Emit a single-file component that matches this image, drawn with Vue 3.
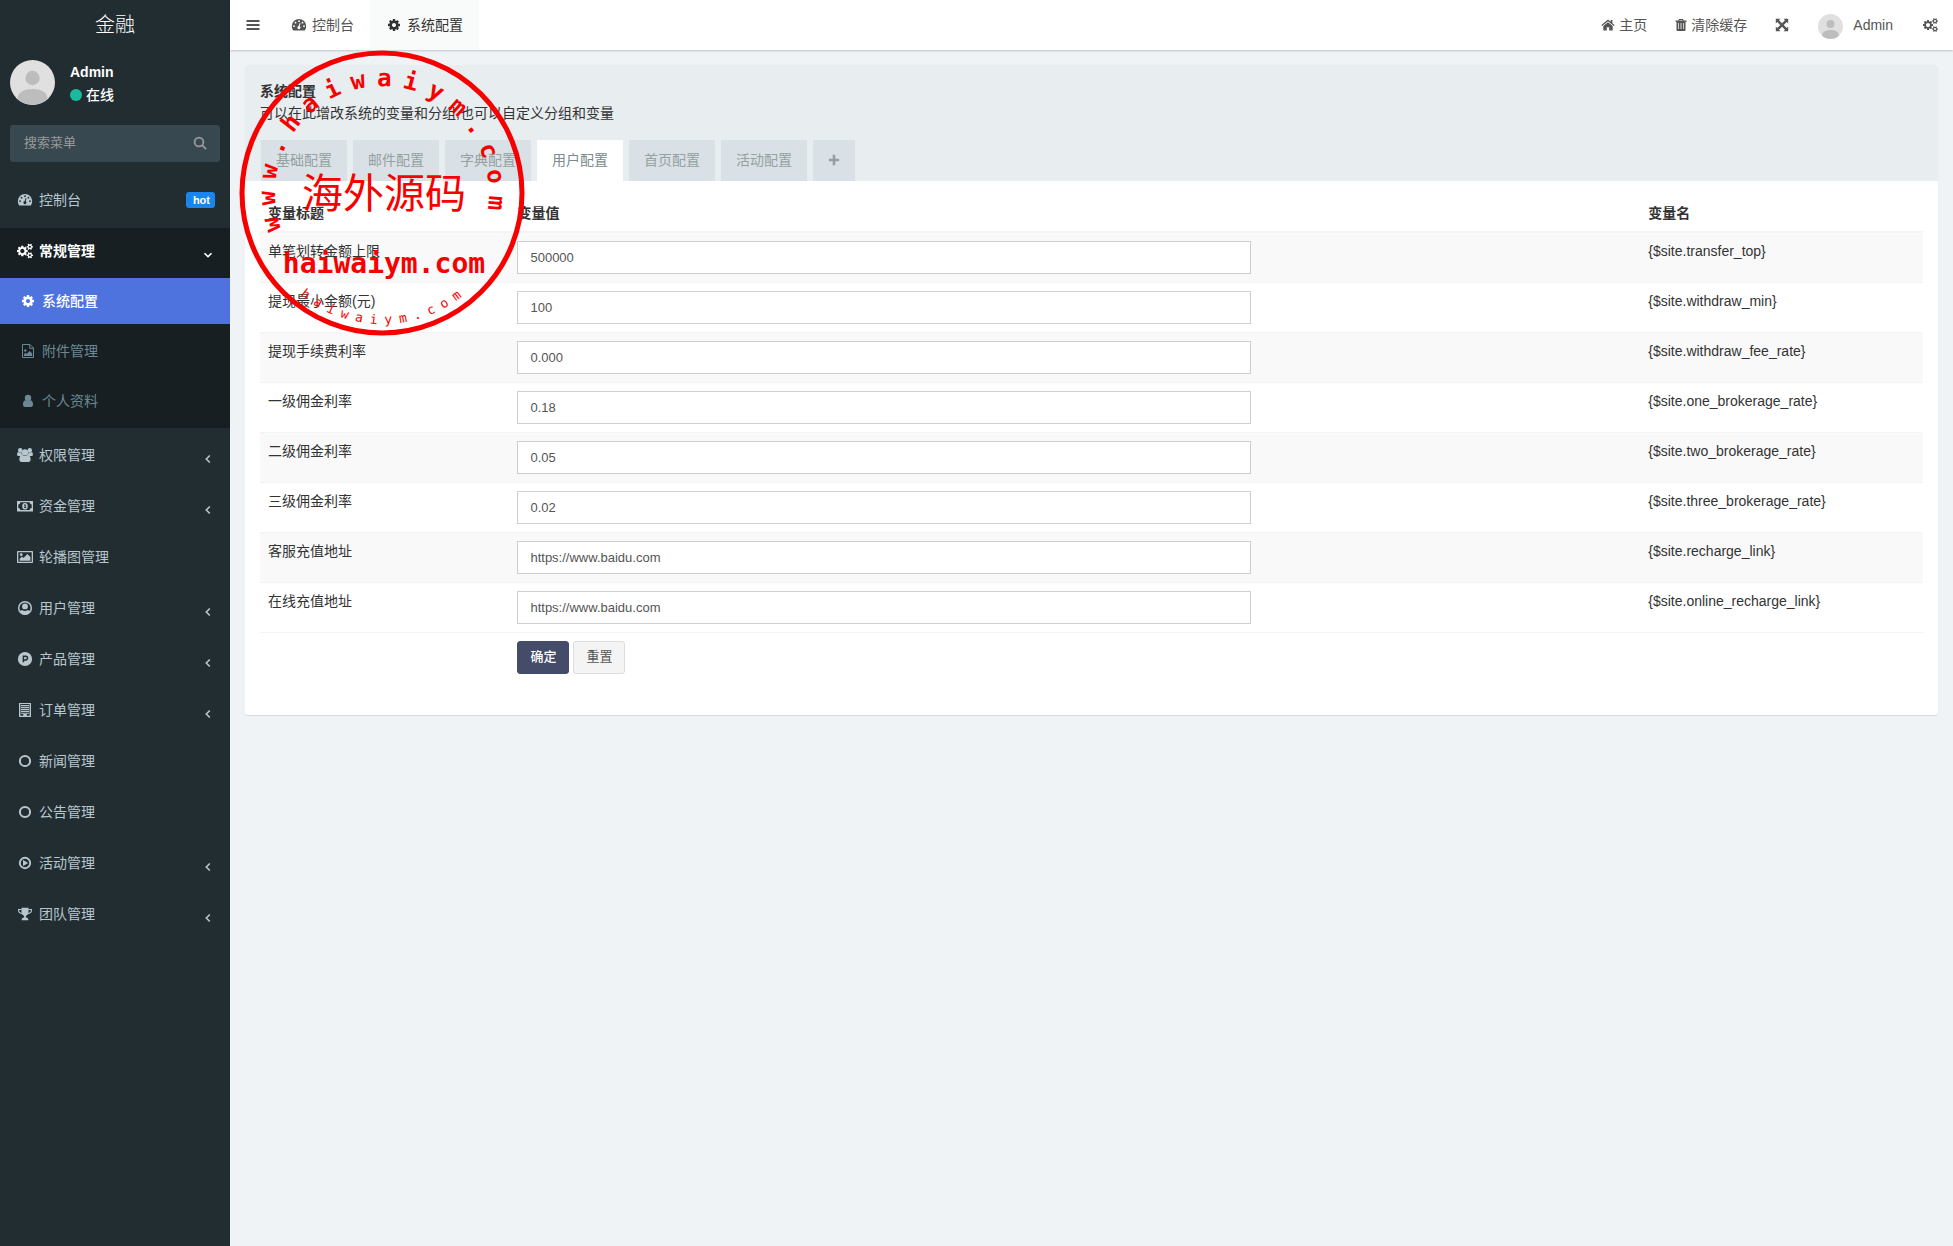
<template>
  <div class="layout">
    <!-- Icon sprite -->
    <svg class="sprite" aria-hidden="true">
      <symbol id="i-cog" viewBox="-128 -128 2048 2048"><path d="M1152 896q0-106-75-181t-181-75-181 75-75 181 75 181 181 75 181-75 75-181zm512-109v222q0 12-8 23t-20 13l-185 28q-19 54-39 91 35 50 107 138 10 12 10 25t-9 23q-27 37-99 108t-94 71q-12 0-26-9l-138-108q-44 23-91 38-16 136-29 186-7 28-36 28h-222q-14 0-24.500-8.500t-11.500-21.500l-28-184q-49-16-90-37l-141 107q-10 9-25 9-14 0-25-11-126-114-165-168-7-10-7-23 0-12 8-23 15-21 51-66.500t54-70.500q-27-50-41-99l-183-27q-13-2-21-12.500t-8-23.500v-222q0-12 8-23t19-13l186-28q14-46 39-92-40-57-107-138-10-12-10-24 0-10 9-23 26-36 98.500-107.500t94.500-71.500q13 0 26 10l138 107q44-23 91-38 16-136 29-186 7-28 36-28h222q14 0 24.500 8.500t11.500 21.500l28 184q49 16 90 37l142-107q9-9 24-9 13 0 25 10 129 119 165 170 7 8 7 22 0 12-8 23-15 21-51 66.500t-54 70.500q26 50 41 98l183 28q13 2 21 12.500t8 23.500z" /></symbol>
      <symbol id="i-cogs" viewBox="0 0 1920 1792"><path d="M896 896q0-106-75-181t-181-75-181 75-75 181 75 181 181 75 181-75 75-181zm768 512q0-52-38-90t-90-38-90 38-38 90q0 53 37.500 90.500t90.500 37.500 90.500-37.500 37.500-90.500zm0-1024q0-52-38-90t-90-38-90 38-38 90q0 53 37.500 90.500t90.500 37.500 90.500-37.500 37.500-90.500zm-384 421v185q0 10-7 19.500t-16 10.500l-155 24q-11 35-32 76 34 48 90 115 7 11 7 20 0 12-7 19-23 30-82.500 89.500t-78.500 59.500q-11 0-21-7l-115-90q-37 19-77 31-11 108-23 155-7 24-30 24h-186q-11 0-20-7.500t-10-17.500l-23-153q-34-10-75-31l-118 89q-7 7-20 7-11 0-21-8-144-133-144-160 0-9 7-19 10-14 41-53t47-61q-23-44-35-82l-152-24q-10-1-17-9.500t-7-19.500v-185q0-10 7-19.500t16-10.500l155-24q11-35 32-76-34-48-90-115-7-11-7-20 0-12 7-20 22-30 82-89t79-59q11 0 21 7l115 90q34-18 77-32 11-108 23-154 7-24 30-24h186q11 0 20 7.500t10 17.500l23 153q34 10 75 31l118-89q8-7 20-7 11 0 21 8 144 133 144 160 0 8-7 19-12 16-42 54t-45 60q23 48 34 82l152 23q10 2 17 10.500t7 19.500zm640 533v140q0 16-149 31-12 27-30 52 51 113 51 138 0 4-4 7-122 71-124 71-8 0-46-47t-52-68q-20 2-30 2t-30-2q-14 21-52 68t-46 47q-2 0-124-71-4-3-4-7 0-25 51-138-18-25-30-52-149-15-149-31v-140q0-16 149-31 13-29 30-52-51-113-51-138 0-4 4-7 4-2 35-20t59-34 30-16q8 0 46 46.500t52 67.500q20-2 30-2t30 2q51-71 92-112l6-2q4 0 124 70 4 3 4 7 0 25-51 138 17 23 30 52 149 15 149 31zm0-1024v140q0 16-149 31-12 27-30 52 51 113 51 138 0 4-4 7-122 71-124 71-8 0-46-47t-52-68q-20 2-30 2t-30-2q-14 21-52 68t-46 47q-2 0-124-71-4-3-4-7 0-25 51-138-18-25-30-52-149-15-149-31v-140q0-16 149-31 13-29 30-52-51-113-51-138 0-4 4-7 4-2 35-20t59-34 30-16q8 0 46 46.500t52 67.500q20-2 30-2t30 2q51-71 92-112l6-2q4 0 124 70 4 3 4 7 0 25-51 138 17 23 30 52 149 15 149 31z" /></symbol>
      <symbol id="i-dashboard" viewBox="0 0 16 16"><path fill-rule="evenodd" d="M8 2a7.200 7.200 0 0 0-7.200 7.200c0 1.500.4 2.800 1.200 4 .1.200.3.300.5.300h11c.2 0 .4-.1.500-.3.800-1.200 1.200-2.500 1.200-4A7.200 7.200 0 0 0 8 2zM3 8.300a.9.9 0 1 1 0 1.800.9.9 0 0 1 0-1.800zM4.500 4.800a.9.9 0 1 1 0 1.800.9.9 0 0 1 0-1.800zM8 3.300a.9.9 0 1 1 0 1.800.9.9 0 0 1 0-1.800zM11.500 4.800a.9.9 0 1 1 0 1.800.9.9 0 0 1 0-1.800zM13 8.300a.9.9 0 1 1 0 1.800.9.9 0 0 1 0-1.800zM8.600 6l.9.2-.8 3.100a1.500 1.500 0 1 1-1-.2z" /></symbol>
      <symbol id="i-bars" viewBox="0 0 14 14"><path d="M.5 2h13v2H.5zM.5 6h13v2H.5zM.5 10h13v2H.5z" /></symbol>
      <symbol id="i-search" viewBox="0 0 14 14"><g fill="none" stroke="currentColor" stroke-width="1.800"><circle cx="6" cy="6" r="4.400" /><path d="M9.300 9.300l3.300 3.300" stroke-linecap="round" /></g></symbol>
      <symbol id="i-left" viewBox="0 0 14 14"><path d="M8.800 3.500L5.300 7l3.500 3.500" fill="none" stroke="currentColor" stroke-width="1.600" /></symbol>
      <symbol id="i-down" viewBox="0 0 14 14"><path d="M3.500 5.200L7 8.700l3.500-3.500" fill="none" stroke="currentColor" stroke-width="1.600" /></symbol>
      <symbol id="i-file" viewBox="0 0 16 16"><path d="M2.500 1.500h7.500l3.500 3.500v9.500h-11zM9.700 1.500v3.800h3.800" fill="none" stroke="currentColor" /><circle cx="5.300" cy="7.500" r="1.200" /><path d="M4 13v-1.800l1.500-1.400 1.200 1.200 3-3 2.500 2.500V13z" /></symbol>
      <symbol id="i-user" viewBox="0 0 16 16"><circle cx="8" cy="5" r="3.200" /><path d="M5.300 7.300C3.600 7.500 3 9.500 3 11.800c0 1.300.8 2.200 2 2.200h6c1.200 0 2-.9 2-2.200 0-2.300-.6-4.300-2.300-4.500-1.500 1.400-3.900 1.400-5.400 0z" /></symbol>
      <symbol id="i-users" viewBox="0 0 16 16"><circle cx="3.200" cy="3.200" r="2.200" /><circle cx="12.800" cy="3.200" r="2.200" /><circle cx="8" cy="5.400" r="3.200" /><path d="M5.400 8C2.900 8 2.400 10.600 2.400 12.800c0 1.300.9 2.200 2.100 2.200h7c1.200 0 2.100-.9 2.100-2.200 0-2.200-.5-4.800-3-4.800-1.600 1.400-3.600 1.400-5.200 0zM1.400 4.900C.3 5 .1 6.300.1 7.700c0 .9.600 1.400 1.400 1.400h1.800c.5-.7 1.200-1.200 2-1.300-.7-.8-1-1.700-.9-2.700-1 .6-2.100.5-3-.2zM14.600 4.900c1.100.1 1.300 1.400 1.300 2.800 0 .9-.6 1.400-1.400 1.400h-1.800c-.5-.7-1.200-1.200-2-1.300.7-.8 1-1.700.9-2.700 1 .6 2.100.5 3-.2z" /></symbol>
      <symbol id="i-money" viewBox="0 0 16 16"><path fill-rule="evenodd" d="M0 3h16v10.400H0zM3.400 4.300c0 1.200-.9 2.100-2.100 2.100V10c1.200 0 2.100.9 2.100 2.100h9.200c0-1.200.9-2.100 2.100-2.100V6.400c-1.200 0-2.100-.9-2.100-2.100z" /><path fill-rule="evenodd" d="M8 4.900a2.800 3.300 0 1 1 0 6.600 2.800 3.300 0 0 1 0-6.600zM7 6.600v.8h.6v1.800H7v.8h2.200v-.8h-.5V6.400h-.8z" /></symbol>
      <symbol id="i-image" viewBox="0 0 16 16"><path fill-rule="evenodd" d="M.8 2h14.400c.5 0 .8.300.8.800v10.400c0 .5-.3.800-.8.800H.8c-.5 0-.8-.3-.8-.8V2.800C0 2.300.3 2 .8 2zm.5 1.200v9.600h13.400V3.200z" /><circle cx="4.200" cy="5.700" r="1.400" /><path d="M2.600 11.800V9.900l2.300-2.300 1.500 1.500 4-4 3 3v3.700z" /></symbol>
      <symbol id="i-usercircle" viewBox="0 0 16 16"><circle cx="8" cy="8" r="6.300" fill="none" stroke="currentColor" stroke-width="1.500" /><circle cx="8" cy="6.400" r="2.900" /><path d="M2.800 11.600c.8-.6 1.500-1.300 2.200-1.500 1.900 1.300 4.100 1.300 6 0 .7.200 1.400.9 2.200 1.500C12 13.700 10.200 15 8 15s-4-1.300-5.200-3.400z" /></symbol>
      <symbol id="i-product" viewBox="0 0 16 16"><circle cx="8" cy="8" r="7.100" /><path d="M6.400 11.300V5.300h2.300a1.800 1.800 0 0 1 0 3.600H6.400" fill="none" stroke="#222d32" stroke-width="1.500" /></symbol>
      <symbol id="i-building" viewBox="0 0 16 16"><path fill-rule="evenodd" d="M2 1h12v14H2zM3.400 2v11.800h2.800V12h3.600v1.800h2.800V2z" /><path d="M4 3h8v1.200H4zM4 5h8v1.200H4zM4 7h8v1.200H4zM4 9h8v1.200H4zM4 11h8v.8H4z" /></symbol>
      <symbol id="i-circle" viewBox="0 0 16 16"><circle cx="8" cy="8" r="5.100" fill="none" stroke="currentColor" stroke-width="2" /></symbol>
      <symbol id="i-play" viewBox="0 0 16 16"><circle cx="8" cy="8" r="5.200" fill="none" stroke="currentColor" stroke-width="1.900" /><path d="M6 4.900L11.200 8 6 11.100z" /></symbol>
      <symbol id="i-trophy" viewBox="0 0 16 16"><path d="M4.500 1.800h7V6c0 2-1.200 3.400-2.600 3.900v1.600c1.600.1 2.400.7 2.400 2v.7H4.700v-.7c0-1.300.8-1.900 2.400-2V9.900C5.700 9.400 4.500 8 4.500 6z" /><path d="M4.500 3.500H1.600v1c0 1.600 1.600 3 4 3.200M11.500 3.500h2.900v1c0 1.600-1.600 3-4 3.200" fill="none" stroke="currentColor" stroke-width="1.100" /></symbol>
      <symbol id="i-home" viewBox="0 0 14 14"><path d="M7 4.200l4.700 3.900v3.800c0 .4-.2.600-.6.600H8.200V9.200H5.800v3.300H2.900c-.4 0-.6-.2-.6-.6V8.100z" /><path d="M7 1.600l2.700 2.200V2h1.700v3.200l2.200 1.900-.7.900L7 3.200 1.100 8l-.7-.9z" /></symbol>
      <symbol id="i-trash" viewBox="1 0 12 14"><path fill-rule="evenodd" d="M5 1h4l.7 1.500h2.800v1.200h-1v8c0 .9-.5 1.300-1.200 1.300H3.700c-.7 0-1.200-.4-1.200-1.300v-8h-1V2.500h2.800zm.5.900l-.3.600h3.600l-.3-.6zM4.300 5v6h.7V5zM6.600 5v6h.8V5zM9 5v6h.7V5z" /></symbol>
      <symbol id="i-expand" viewBox="0 0 14 14"><path d="M.8.800h4.700L4 2.300l3 3 3-3L8.500.8h4.700v4.700L11.700 4l-3 3 3 3 1.500-1.500v4.700H8.500l1.500-1.500-3-3-3 3 1.500 1.500H.8V8.500L2.300 10l3-3-3-3L.8 5.500z" /></symbol>
      <symbol id="i-plus" viewBox="0 0 14 14"><path d="M5.500 1h3v4.500H13v3H8.500V13h-3V8.500H1v-3h4.500z" /></symbol>
      <symbol id="i-avatar" viewBox="0 0 45 45"><circle cx="22.500" cy="22.500" r="22.500" fill="#e0e0e0" /><circle cx="22.500" cy="18" r="7.200" fill="#bdbdbd" /><path d="M7.500 39c0-7 7-10 15-10s15 3 15 10a22.500 22.500 0 0 1-30 0z" fill="#bdbdbd" /></symbol>
    </svg>

    <aside class="sidebar">
      <a href="#" class="logo">金融</a>

      <div class="user-panel">
        <svg class="avatar"><use href="#i-avatar" /></svg>
        <div class="info">
          <strong>Admin</strong>
          <span class="status"><i class="dot"></i>在线</span>
        </div>
      </div>

      <form class="search" @submit.prevent>
        <input type="text" placeholder="搜索菜单" aria-label="搜索菜单" />
        <button type="submit" aria-label="搜索"><svg><use href="#i-search" /></svg></button>
      </form>

      <ul class="menu">
        <li v-for="m in menus" :key="m.name" :class="{ active: m.children }">
          <a href="#">
            <svg class="icon"><use :href="'#i-' + m.icon" /></svg>
            <span>{{ m.name }}</span>
            <span v-if="m.badge" class="badge">{{ m.badge }}</span>
            <svg v-if="m.arrow" class="arrow"><use :href="'#i-' + m.arrow" /></svg>
          </a>
          <ul v-if="m.children" class="submenu">
            <li v-for="c in m.children" :key="c.name">
              <a href="#" :class="{ current: c.current }">
                <svg class="icon"><use :href="'#i-' + c.icon" /></svg>
                <span>{{ c.name }}</span>
              </a>
            </li>
          </ul>
        </li>
      </ul>
    </aside>

    <div class="main">
      <header class="navbar">
        <button class="toggle" aria-label="菜单"><svg><use href="#i-bars" /></svg></button>
        <a href="#" class="nav-tab"><svg class="icon"><use href="#i-dashboard" /></svg>控制台</a>
        <a href="#" class="nav-tab on"><svg class="icon"><use href="#i-cog" /></svg>系统配置</a>
        <nav class="tools">
          <a href="#"><svg><use href="#i-home" /></svg>主页</a>
          <a href="#"><svg class="narrow"><use href="#i-trash" /></svg>清除缓存</a>
          <a href="#" aria-label="全屏"><svg><use href="#i-expand" /></svg></a>
          <a href="#" class="account"><svg><use href="#i-avatar" /></svg>Admin</a>
          <a href="#" class="settings" aria-label="设置"><svg><use href="#i-cogs" /></svg></a>
        </nav>
      </header>

      <section class="content">
        <div class="panel">
          <div class="panel-heading">
            <h1>系统配置</h1>
            <p>可以在此增改系统的变量和分组,也可以自定义分组和变量</p>
            <div class="tabs">
              <button
                v-for="t in tabs"
                :key="t"
                type="button"
                :class="{ on: t === currentTab }"
                @click="currentTab = t"
              >
                {{ t }}
              </button>
              <button type="button" aria-label="添加"><svg><use href="#i-plus" /></svg></button>
            </div>
          </div>

          <form class="panel-body" @submit.prevent>
            <table>
              <thead>
                <tr>
                  <th class="col-title">变量标题</th>
                  <th class="col-value">变量值</th>
                  <th>变量名</th>
                </tr>
              </thead>
              <tbody>
                <tr v-for="row in rows" :key="row.key">
                  <td><label :for="row.key">{{ row.title }}</label></td>
                  <td><input :id="row.key" v-model="row.value" type="text" /></td>
                  <td>{{ '{$site.' + row.key + '}' }}</td>
                </tr>
              </tbody>
              <tfoot>
                <tr>
                  <td></td>
                  <td>
                    <div class="actions">
                      <button type="submit" class="btn primary">确定</button>
                      <button type="reset" class="btn">重置</button>
                    </div>
                  </td>
                  <td></td>
                </tr>
              </tfoot>
            </table>
          </form>
        </div>
      </section>
    </div>

    <!-- Sello -->
    <svg class="stamp" viewBox="0 0 290 290">
      <circle cx="145" cy="145" r="140" fill="none" stroke="#f60000" stroke-width="5" />
      <text class="ring-top" :x="topRing.x" :y="topRing.y" :rotate="topRing.rotate">www.haiwaiym.com</text>
      <text class="stamp-name" x="147" y="160" text-anchor="middle">海外源码</text>
      <text class="stamp-site" x="147" y="225" text-anchor="middle">haiwaiym.com</text>
      <text class="ring-bottom" :x="bottomRing.x" :y="bottomRing.y" :rotate="bottomRing.rotate">haiwaiym.com</text>
    </svg>
  </div>
</template>

<script setup>
import { ref } from 'vue'

const menus = [
  { name: '控制台', icon: 'dashboard', badge: 'hot' },
  {
    name: '常规管理',
    icon: 'cogs',
    arrow: 'down',
    children: [
      { name: '系统配置', icon: 'cog', current: true },
      { name: '附件管理', icon: 'file' },
      { name: '个人资料', icon: 'user' }
    ]
  },
  { name: '权限管理', icon: 'users', arrow: 'left' },
  { name: '资金管理', icon: 'money', arrow: 'left' },
  { name: '轮播图管理', icon: 'image' },
  { name: '用户管理', icon: 'usercircle', arrow: 'left' },
  { name: '产品管理', icon: 'product', arrow: 'left' },
  { name: '订单管理', icon: 'building', arrow: 'left' },
  { name: '新闻管理', icon: 'circle' },
  { name: '公告管理', icon: 'circle' },
  { name: '活动管理', icon: 'play', arrow: 'left' },
  { name: '团队管理', icon: 'trophy', arrow: 'left' }
]

const tabs = ['基础配置', '邮件配置', '字典配置', '用户配置', '首页配置', '活动配置']
const currentTab = ref('用户配置')

const rows = ref([
  { key: 'transfer_top', title: '单笔划转金额上限', value: '500000' },
  { key: 'withdraw_min', title: '提现最小金额(元)', value: '100' },
  { key: 'withdraw_fee_rate', title: '提现手续费利率', value: '0.000' },
  { key: 'one_brokerage_rate', title: '一级佣金利率', value: '0.18' },
  { key: 'two_brokerage_rate', title: '二级佣金利率', value: '0.05' },
  { key: 'three_brokerage_rate', title: '三级佣金利率', value: '0.02' },
  { key: 'recharge_link', title: '客服充值地址', value: 'https://www.baidu.com' },
  { key: 'online_recharge_link', title: '在线充值地址', value: 'https://www.baidu.com' }
])

// Position of each glyph along a circle, angles in degrees clockwise from the top.
// The glyphs are monospaced, so the start is half an advance before the centre.
function ring(count, from, to, radius, size, inward) {
  const x = []
  const y = []
  const rotate = []
  for (let i = 0; i < count; i++) {
    const deg = from + ((to - from) * i) / (count - 1)
    const a = (deg * Math.PI) / 180
    const turn = inward ? deg - 180 : deg
    const t = (turn * Math.PI) / 180
    x.push((145 + radius * Math.sin(a) - size * 0.3 * Math.cos(t)).toFixed(1))
    y.push((145 - radius * Math.cos(a) - size * 0.3 * Math.sin(t)).toFixed(1))
    rotate.push(turn.toFixed(1))
  }
  return { x: x.join(' '), y: y.join(' '), rotate: rotate.join(' ') }
}

const topRing = ring(16, -106, 95, 107, 24, false)
const bottomRing = ring(12, 217, 144, 131, 13, true)
</script>

<style>
body {
  margin: 0;
  background: #eff3f6;
}
</style>

<style scoped>
* {
  box-sizing: border-box;
}
.layout {
  position: relative;
  display: flex;
  min-height: 100vh;
  font: 14px/20px "Liberation Sans", "Noto Sans CJK SC", sans-serif;
  color: #333;
}
.layout a {
  color: inherit;
  text-decoration: none;
}
svg {
  fill: currentColor;
  flex: none;
}
.sprite {
  position: absolute;
  width: 0;
  height: 0;
}
ul {
  list-style: none;
  margin: 0;
  padding: 0;
}
button,
input {
  font: inherit;
  color: inherit;
}
.icon {
  width: 16px;
  height: 16px;
}

/* Sidebar */
.sidebar {
  flex: none;
  width: 230px;
  background: #222d32;
  color: #b8c7ce;
}
.logo {
  display: block;
  line-height: 50px;
  text-align: center;
  font-size: 20px;
  font-weight: 300;
}
.layout .logo {
  color: #fff;
}
.user-panel {
  display: flex;
  gap: 15px;
  padding: 10px;
  color: #fff;
}
.avatar {
  width: 45px;
  height: 45px;
}
.info {
  display: flex;
  flex-direction: column;
  gap: 3px;
  padding-top: 2px;
}
.status {
  display: flex;
  align-items: center;
  gap: 4px;
  font-weight: 500;
}
.dot {
  width: 12px;
  height: 12px;
  border-radius: 50%;
  background: #18bc9c;
}
.search {
  display: flex;
  height: 37px;
  margin: 10px 10px 15px;
  border-radius: 3px;
  background: #374850;
  color: #999;
}
.search input {
  flex: 1;
  min-width: 0;
  padding: 0 14px 2px;
  border: 0;
  background: none;
  font-size: 13px;
  outline: none;
}
.search input::placeholder {
  color: #999;
}
.search button {
  display: flex;
  align-items: center;
  padding: 0 13px 2px;
  border: 0;
  background: none;
}
.search svg {
  width: 14px;
  height: 14px;
}
.menu > li {
  margin-bottom: 1px;
}
.menu > li > a {
  display: flex;
  align-items: center;
  gap: 6px;
  height: 50px;
  padding: 0 15px 4px 17px;
}
.menu > li.active {
  margin-bottom: 4px;
  background: #181f22;
}
.menu > li.active > a {
  color: #fff;
  font-weight: 600;
}
.badge {
  margin-left: auto;
  padding: 0 5px 0 7px;
  border-radius: 3px;
  background: #1b85ee;
  color: #fff;
  font-size: 11px;
  font-weight: 700;
  line-height: 16px;
}
.arrow {
  width: 14px;
  height: 14px;
  margin: 8px 0 0 auto;
}
.submenu li {
  padding-bottom: 4px;
}
.submenu a {
  display: flex;
  align-items: center;
  gap: 6px;
  height: 46px;
  padding-left: 20px;
}
.layout .submenu a {
  color: #6a8995;
}
.layout .submenu a.current {
  background: #4e73df;
  color: #fff;
  font-weight: 500;
}

/* Navbar */
.main {
  flex: 1;
  min-width: 0;
}
.navbar {
  display: flex;
  height: 50px;
  background: #fff;
  color: #555;
  box-shadow: 0 1px 2px rgba(0, 21, 41, 0.2);
}
.toggle {
  display: flex;
  align-items: center;
  padding: 0 15px 0 16px;
  border: 0;
  background: none;
}
.toggle svg {
  width: 14px;
  height: 14px;
}
.nav-tab {
  display: flex;
  align-items: center;
  gap: 5px;
  padding: 0 16px;
}
.nav-tab.on {
  background: #f9fafa;
}
.layout .nav-tab.on {
  color: #333;
}
.tools {
  display: flex;
  margin-left: auto;
}
.tools a {
  display: flex;
  align-items: center;
  gap: 4px;
  padding: 0 14px;
}
.tools svg {
  width: 14px;
  height: 14px;
}
.tools .narrow {
  width: 12px;
}
.tools .account {
  gap: 10px;
  padding: 0 15px;
}
.tools .account svg {
  width: 25px;
  height: 25px;
  margin-top: 2px;
}
.tools .settings {
  padding: 0 15px;
}
.tools .settings svg {
  width: 15px;
}

/* Panel */
.content {
  padding: 15px;
}
.panel {
  border-radius: 3px;
  background: #fff;
  box-shadow: 0 1px 1px rgba(0, 0, 0, 0.1);
}
.panel-heading {
  padding: 15px 15px 0;
  border-radius: 3px 3px 0 0;
  background: #e8edf0;
}
h1 {
  margin: 0;
  font-size: 14px;
  font-weight: 700;
  line-height: 22px;
}
p {
  margin: 0;
  line-height: 22px;
}
.tabs {
  display: flex;
  gap: 6px;
  margin: 16px 1px 0;
}
.tabs button {
  display: flex;
  align-items: center;
  height: 41px;
  padding: 0 15px 2px;
  border: 0;
  background: #d9e0e6;
  color: #95a0a0;
}
.tabs button.on {
  background: #fff;
  color: #7b8a8b;
}
.tabs svg {
  width: 12px;
  height: 12px;
}
.panel-body {
  padding: 14px 15px 15px;
}
table {
  width: 100%;
  margin-bottom: 18px;
  border-spacing: 0;
  table-layout: fixed;
}
th,
td {
  padding: 8px;
  text-align: left;
  vertical-align: top;
}
th {
  border-bottom: 1px solid #f4f4f4;
}
td {
  border-top: 1px solid #f4f4f4;
}
.col-title {
  width: 15%;
}
.col-value {
  width: 68%;
}
tbody tr:nth-child(odd) {
  background: #f9f9f9;
}
td input {
  display: block;
  width: calc((100% + 30px) * 2 / 3 - 30px);
  height: 33px;
  padding: 0 12px;
  border: 1px solid #ccd0d2;
  background: #fff;
  color: #555;
  font-size: 13px;
}
.actions {
  display: flex;
  gap: 4px;
}
.btn {
  height: 33px;
  padding: 0 12px 2px;
  border: 1px solid #ddd;
  border-radius: 3px;
  background: #f4f4f4;
  color: #555;
  font-size: 13px;
}
.btn.primary {
  border-color: #444c69;
  background: #444c69;
  color: #fff;
  font-weight: 500;
}

/* Sello */
.stamp {
  position: absolute;
  top: 48px;
  left: 237px;
  width: 290px;
  height: 290px;
  pointer-events: none;
  fill: #f60000;
}
.ring-top {
  font: 700 24px "DejaVu Sans Mono", monospace;
}
.ring-bottom {
  font: 13px "DejaVu Sans Mono", monospace;
}
.stamp-name {
  font: 41px "Noto Sans CJK SC", sans-serif;
}
.stamp-site {
  font: 700 28px "DejaVu Sans Mono", monospace;
}
</style>
